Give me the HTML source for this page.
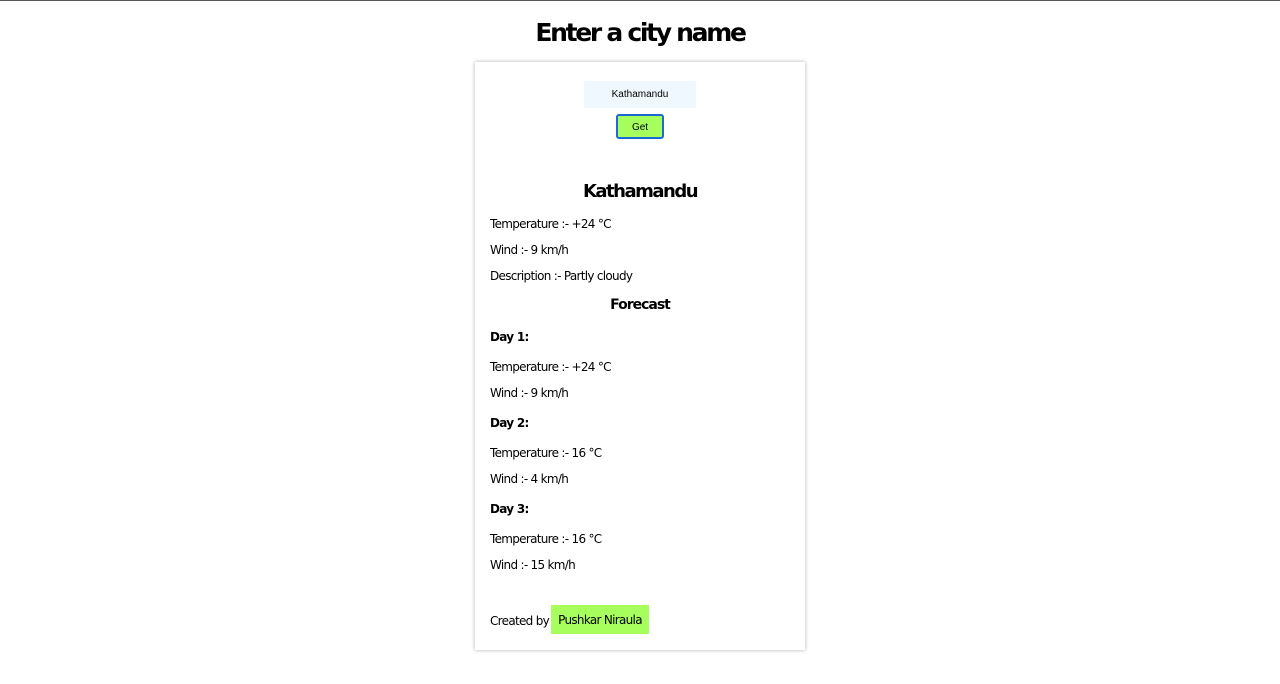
<html><head><style>
body{margin:0;background:#fff;font-family:"DejaVu Sans","Liberation Sans",sans-serif;color:#000;}
.top{position:absolute;left:0;top:0;width:1280px;height:1px;background:#555;}
.t{position:absolute;white-space:nowrap;}
h1{position:absolute;top:18px;left:0;width:1280px;text-align:center;margin:0;font-size:25px;font-weight:bold;letter-spacing:-2.3px;}
.card{position:absolute;left:475px;top:62px;width:330px;height:588px;background:#fff;box-shadow:0 0 4px rgba(0,0,0,.3);}
.p{font-size:12px;left:15px;letter-spacing:-0.7px;}
.b{font-weight:bold;}
</style></head><body>
<div class="top"></div>
<h1>Enter a city name</h1>
<div class="card">
<div class="t" style="left:109px;top:19px;width:112px;height:27px;background:#f0f8ff;font-size:10px;text-align:center;line-height:28px;font-family:'Liberation Sans',sans-serif">Kathamandu</div>
<div class="t" style="left:141px;top:52px;width:44px;height:21px;background:#a6ff5c;border:2px solid #1a6ad6;border-radius:3px;font-size:10px;text-align:center;line-height:23px;font-family:'Liberation Sans',sans-serif">Get</div>
<div class="t b" style="left:0;width:330px;text-align:center;top:119px;font-size:18px;letter-spacing:-1.5px">Kathamandu</div>
<div class="t p" style="top:155px">Temperature :- +24 °C</div>
<div class="t p" style="top:181px">Wind :- 9 km/h</div>
<div class="t p" style="top:207px">Description :- Partly cloudy</div>
<div class="t b" style="left:0;width:330px;text-align:center;top:235px;font-size:14px;letter-spacing:-1px">Forecast</div>
<div class="t p b" style="top:268px">Day 1:</div>
<div class="t p" style="top:298px">Temperature :- +24 °C</div>
<div class="t p" style="top:324px">Wind :- 9 km/h</div>
<div class="t p b" style="top:354px">Day 2:</div>
<div class="t p" style="top:384px">Temperature :- 16 °C</div>
<div class="t p" style="top:410px">Wind :- 4 km/h</div>
<div class="t p b" style="top:440px">Day 3:</div>
<div class="t p" style="top:470px">Temperature :- 16 °C</div>
<div class="t p" style="top:496px">Wind :- 15 km/h</div>
<div class="t p" style="top:552px">Created by</div>
<div class="t" style="left:76px;top:543px;width:98px;height:29px;background:#a6ff5c;font-size:12px;line-height:31px;text-align:center;letter-spacing:-0.7px">Pushkar Niraula</div>
</div>
</body></html>
